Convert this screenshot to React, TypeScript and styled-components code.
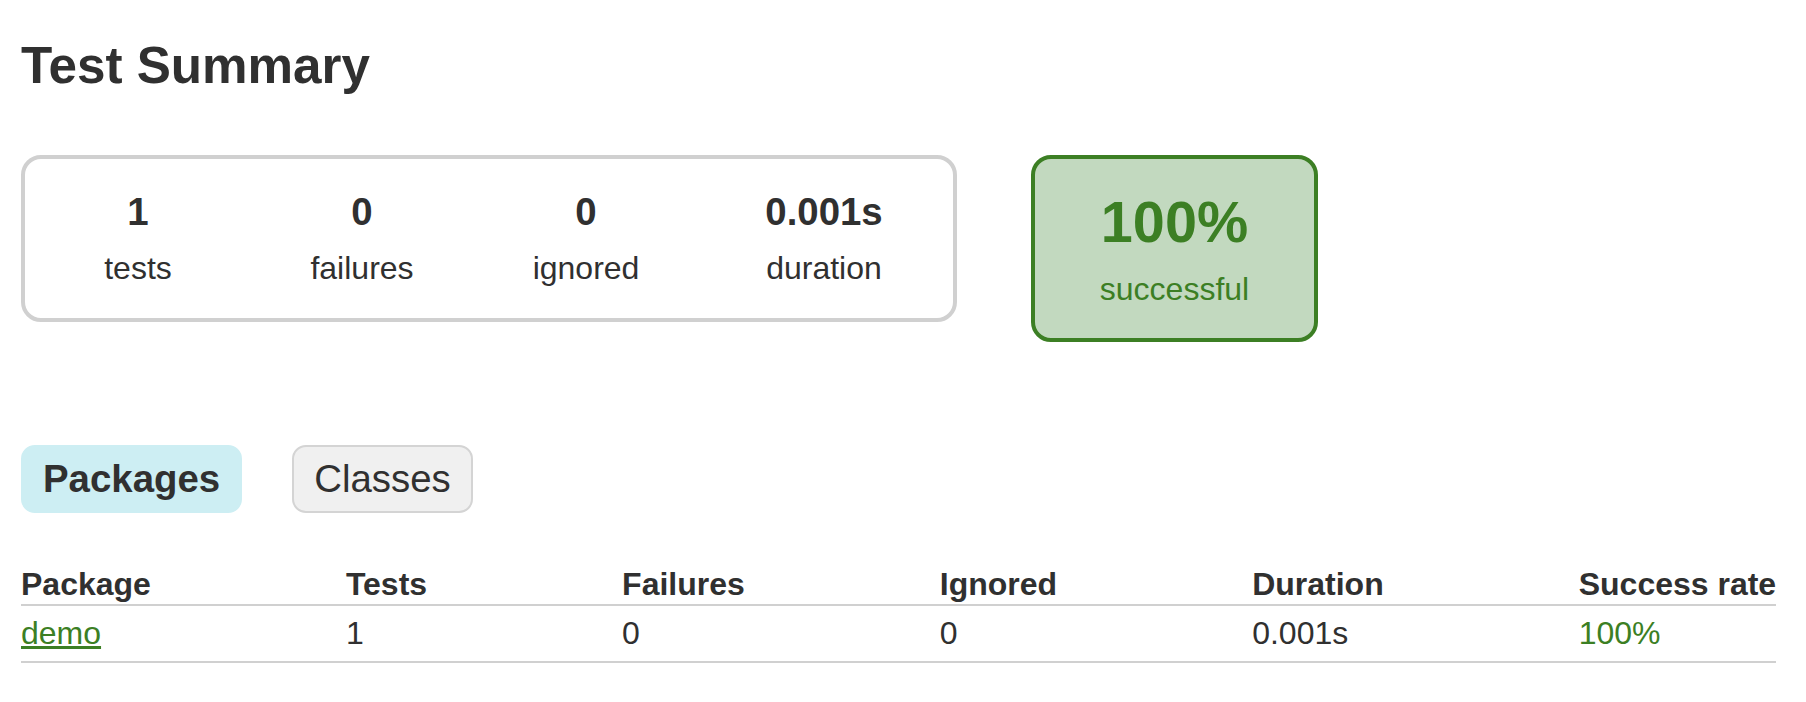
import styled, { createGlobalStyle } from "styled-components";

const GlobalStyle = createGlobalStyle`
  html, body {
    margin: 0;
    padding: 0;
    background: #ffffff;
  }
  body {
    font-family: "Liberation Sans", Arial, Helvetica, sans-serif;
    font-size: 32px;
    color: #303030;
  }
`;

const green = "#3c7f24";

const Content = styled.div`
  padding: 0 21px;
`;

const Title = styled.h1`
  font-size: 51.2px;
  font-weight: bold;
  line-height: normal;
  margin: 36px 0 0;
  white-space: nowrap;
`;

const SummaryRow = styled.div`
  display: flex;
  align-items: flex-start;
  margin-top: 60px;
`;

const SummaryGroup = styled.div`
  display: flex;
  padding: 0 3px 0 1px;
  border: 4px solid #d0d0d0;
  border-radius: 20px;
`;

const InfoBox = styled.div<{ wide?: boolean }>`
  width: ${(p) => (p.wide ? 252 : 224)}px;
  padding: 31px 0;
  text-align: center;
`;

const Counter = styled.div`
  font-size: 38.4px;
  font-weight: bold;
  line-height: normal;
  margin-bottom: 16px;
`;

const Label = styled.div`
  line-height: normal;
`;

const SuccessRate = styled.div`
  width: 279px;
  margin-left: 74px;
  padding: 30px 0;
  text-align: center;
  color: ${green};
  background-color: #c2d9bf;
  border: 4px solid ${green};
  border-radius: 20px;
`;

const Percent = styled.div`
  font-size: 57.6px;
  font-weight: bold;
  line-height: normal;
  margin-bottom: 16px;
`;

const TabList = styled.ul`
  display: flex;
  list-style: none;
  margin: 83px 0 32px;
  padding: 20px 0;
`;

const Tab = styled.li<{ selected?: boolean }>`
  padding: 10px 20px;
  margin-right: 50px;
  border: 2px solid ${(p) => (p.selected ? "#cdeef3" : "#d4d4d4")};
  border-radius: 14px;
  background-color: ${(p) => (p.selected ? "#cdeef3" : "#f0f0f0")};
  font-size: 38.4px;
  font-weight: ${(p) => (p.selected ? "bold" : "normal")};
  line-height: normal;
  cursor: pointer;
`;

const Table = styled.table`
  border-collapse: collapse;
  border-bottom: 2px solid #d0d0d0;
`;

const Th = styled.th`
  text-align: left;
  white-space: nowrap;
  font-weight: bold;
  padding: 1px 0 1px 195px;
  border-bottom: 2px solid #d0d0d0;
  line-height: normal;
  &:first-child {
    padding-left: 0;
  }
`;

const Td = styled.td<{ success?: boolean }>`
  white-space: nowrap;
  padding: 9px 0 9px 195px;
  line-height: normal;
  color: ${(p) => (p.success ? green : "#303030")};
  &:first-child {
    padding-left: 0;
  }
`;

const PackageLink = styled.a`
  color: ${green};
  text-decoration: underline;
`;

const counters = [
  { value: "1", label: "tests" },
  { value: "0", label: "failures" },
  { value: "0", label: "ignored" },
  { value: "0.001s", label: "duration", wide: true },
];

const packages = [
  { name: "demo", tests: 1, failures: 0, ignored: 0, duration: "0.001s", rate: "100%" },
];

export default function App() {
  return (
    <>
      <GlobalStyle />
      <Content>
        <Title>Test Summary</Title>
        <SummaryRow>
          <SummaryGroup>
            {counters.map((c) => (
              <InfoBox key={c.label} wide={c.wide}>
                <Counter>{c.value}</Counter>
                <Label>{c.label}</Label>
              </InfoBox>
            ))}
          </SummaryGroup>
          <SuccessRate>
            <Percent>100%</Percent>
            <Label>successful</Label>
          </SuccessRate>
        </SummaryRow>
        <TabList>
          <Tab selected>Packages</Tab>
          <Tab>Classes</Tab>
        </TabList>
        <Table>
          <thead>
            <tr>
              <Th>Package</Th>
              <Th>Tests</Th>
              <Th>Failures</Th>
              <Th>Ignored</Th>
              <Th>Duration</Th>
              <Th>Success rate</Th>
            </tr>
          </thead>
          <tbody>
            {packages.map((p) => (
              <tr key={p.name}>
                <Td>
                  <PackageLink href="#">{p.name}</PackageLink>
                </Td>
                <Td>{p.tests}</Td>
                <Td>{p.failures}</Td>
                <Td>{p.ignored}</Td>
                <Td>{p.duration}</Td>
                <Td success>{p.rate}</Td>
              </tr>
            ))}
          </tbody>
        </Table>
      </Content>
    </>
  );
}
